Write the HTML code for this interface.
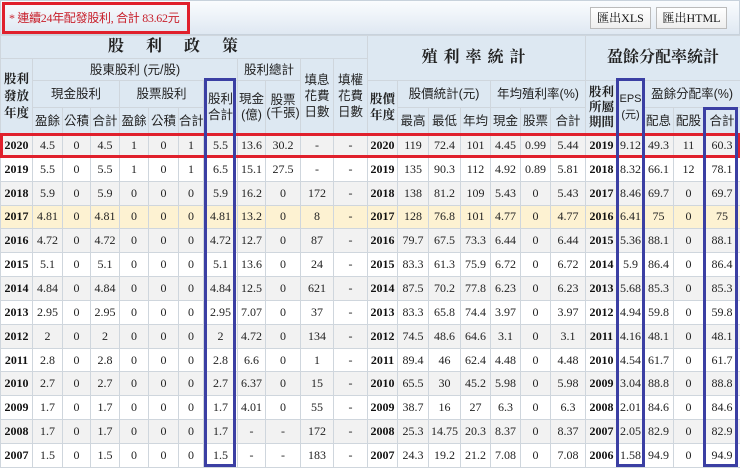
<!DOCTYPE html>
<html><head><meta charset="utf-8"><style>
*{margin:0;padding:0;box-sizing:border-box}
body{width:740px;height:467px;overflow:hidden;background:#fff;position:relative;font-family:"Liberation Serif","Noto Serif CJK SC",serif;}
.top{position:absolute;left:0;top:0;width:740px;height:35px;background:linear-gradient(#fafcfe,#dfe8f2);border:1px solid #c8d2dc;}
.rb{position:absolute;left:1px;top:1px;width:188px;height:32px;border:3px solid #e0202c;color:#c8202c;font-size:12px;line-height:26px;padding-left:4px;letter-spacing:-0.3px;white-space:nowrap;overflow:visible;font-family:"Liberation Serif","Noto Sans CJK TC",serif;}
.btn{position:absolute;top:6px;height:22px;border:1px solid #bbb;background:linear-gradient(#fff,#eee);font-size:12px;line-height:20px;text-align:center;color:#111;font-family:"Liberation Serif","Noto Serif CJK SC",serif;}
table{position:absolute;left:0;top:35px;border-collapse:collapse;table-layout:fixed;width:740px;}
td,th{border:1px solid #cfd6dd;text-align:center;font-size:12px;color:#222;padding:0;overflow:hidden;white-space:nowrap;}
th{background:#dde8f2;font-weight:normal;font-family:"Liberation Sans","Noto Sans CJK TC",sans-serif;font-size:12.5px;line-height:16px;color:#222}
th.b{font-weight:bold;font-family:"Liberation Serif","Noto Serif CJK TC",serif;}
th.big{font-size:16px;font-weight:bold;font-family:"Liberation Serif","Noto Serif CJK TC",serif;}
tbody td{height:23.85px;}
td.y{font-weight:bold;color:#111}
tr.g td{background:#f2f2f2}
tr.h td{background:#fdf2d2}
.box{position:absolute;border:3px solid #3b3fa3;}
.red{position:absolute;border:3px solid #e0202c;}
</style></head><body>
<div class="top"><div class="rb">* 連續24年配發股利, 合計 83.62元</div>
<div class="btn" style="left:589px;width:61px">匯出XLS</div>
<div class="btn" style="left:655px;width:71px">匯出HTML</div></div>
<table>
<colgroup>
<col style="width:32px"><col style="width:30px"><col style="width:28px"><col style="width:29px"><col style="width:29px"><col style="width:30px"><col style="width:25px"><col style="width:34px"><col style="width:28px"><col style="width:35px"><col style="width:33px"><col style="width:34px">
<col style="width:30px"><col style="width:31px"><col style="width:32px"><col style="width:30px"><col style="width:30px"><col style="width:30px"><col style="width:35px"><col style="width:32px"><col style="width:26px"><col style="width:30px"><col style="width:30px"><col style="width:37px">
</colgroup>
<thead>
<tr style="height:23px"><th colspan="12" class="big" style="letter-spacing:22px">股利政策</th><th colspan="7" rowspan="2" class="big" style="letter-spacing:6px">殖利率統計</th><th colspan="5" rowspan="2" class="big">盈餘分配率統計</th></tr>
<tr style="height:22px"><th rowspan="3" class="b" style="white-space:normal;line-height:17px">股利<br>發放<br>年度</th><th colspan="7">股東股利 (元/股)</th><th colspan="2">股利總計</th><th rowspan="3" style="white-space:normal">填息<br>花費<br>日數</th><th rowspan="3" style="white-space:normal">填權<br>花費<br>日數</th></tr>
<tr style="height:27px"><th colspan="3">現金股利</th><th colspan="3">股票股利</th><th rowspan="2">股利<br>合計</th><th rowspan="2">現金<br>(億)</th><th rowspan="2" style="line-height:13px">股票<br>(千張)</th><th rowspan="2" class="b">股價<br>年度</th><th colspan="3">股價統計(元)</th><th colspan="3">年均殖利率(%)</th><th rowspan="2" class="b" style="line-height:15px">股利<br>所屬<br>期間</th><th rowspan="2" style="font-size:11px">EPS<br>(元)</th><th colspan="3">盈餘分配率(%)</th></tr>
<tr style="height:26px"><th>盈餘</th><th>公積</th><th>合計</th><th>盈餘</th><th>公積</th><th>合計</th><th>最高</th><th>最低</th><th>年均</th><th>現金</th><th>股票</th><th>合計</th><th>配息</th><th>配股</th><th>合計</th></tr>
</thead>
<tbody>
<tr class="g"><td class="y">2020</td><td>4.5</td><td>0</td><td>4.5</td><td>1</td><td>0</td><td>1</td><td>5.5</td><td>13.6</td><td>30.2</td><td>-</td><td>-</td><td class="y">2020</td><td>119</td><td>72.4</td><td>101</td><td>4.45</td><td>0.99</td><td>5.44</td><td class="y">2019</td><td>9.12</td><td>49.3</td><td>11</td><td>60.3</td></tr>
<tr><td class="y">2019</td><td>5.5</td><td>0</td><td>5.5</td><td>1</td><td>0</td><td>1</td><td>6.5</td><td>15.1</td><td>27.5</td><td>-</td><td>-</td><td class="y">2019</td><td>135</td><td>90.3</td><td>112</td><td>4.92</td><td>0.89</td><td>5.81</td><td class="y">2018</td><td>8.32</td><td>66.1</td><td>12</td><td>78.1</td></tr>
<tr class="g"><td class="y">2018</td><td>5.9</td><td>0</td><td>5.9</td><td>0</td><td>0</td><td>0</td><td>5.9</td><td>16.2</td><td>0</td><td>172</td><td>-</td><td class="y">2018</td><td>138</td><td>81.2</td><td>109</td><td>5.43</td><td>0</td><td>5.43</td><td class="y">2017</td><td>8.46</td><td>69.7</td><td>0</td><td>69.7</td></tr>
<tr class="h"><td class="y">2017</td><td>4.81</td><td>0</td><td>4.81</td><td>0</td><td>0</td><td>0</td><td>4.81</td><td>13.2</td><td>0</td><td>8</td><td>-</td><td class="y">2017</td><td>128</td><td>76.8</td><td>101</td><td>4.77</td><td>0</td><td>4.77</td><td class="y">2016</td><td>6.41</td><td>75</td><td>0</td><td>75</td></tr>
<tr class="g"><td class="y">2016</td><td>4.72</td><td>0</td><td>4.72</td><td>0</td><td>0</td><td>0</td><td>4.72</td><td>12.7</td><td>0</td><td>87</td><td>-</td><td class="y">2016</td><td>79.7</td><td>67.5</td><td>73.3</td><td>6.44</td><td>0</td><td>6.44</td><td class="y">2015</td><td>5.36</td><td>88.1</td><td>0</td><td>88.1</td></tr>
<tr><td class="y">2015</td><td>5.1</td><td>0</td><td>5.1</td><td>0</td><td>0</td><td>0</td><td>5.1</td><td>13.6</td><td>0</td><td>24</td><td>-</td><td class="y">2015</td><td>83.3</td><td>61.3</td><td>75.9</td><td>6.72</td><td>0</td><td>6.72</td><td class="y">2014</td><td>5.9</td><td>86.4</td><td>0</td><td>86.4</td></tr>
<tr class="g"><td class="y">2014</td><td>4.84</td><td>0</td><td>4.84</td><td>0</td><td>0</td><td>0</td><td>4.84</td><td>12.5</td><td>0</td><td>621</td><td>-</td><td class="y">2014</td><td>87.5</td><td>70.2</td><td>77.8</td><td>6.23</td><td>0</td><td>6.23</td><td class="y">2013</td><td>5.68</td><td>85.3</td><td>0</td><td>85.3</td></tr>
<tr><td class="y">2013</td><td>2.95</td><td>0</td><td>2.95</td><td>0</td><td>0</td><td>0</td><td>2.95</td><td>7.07</td><td>0</td><td>37</td><td>-</td><td class="y">2013</td><td>83.3</td><td>65.8</td><td>74.4</td><td>3.97</td><td>0</td><td>3.97</td><td class="y">2012</td><td>4.94</td><td>59.8</td><td>0</td><td>59.8</td></tr>
<tr class="g"><td class="y">2012</td><td>2</td><td>0</td><td>2</td><td>0</td><td>0</td><td>0</td><td>2</td><td>4.72</td><td>0</td><td>134</td><td>-</td><td class="y">2012</td><td>74.5</td><td>48.6</td><td>64.6</td><td>3.1</td><td>0</td><td>3.1</td><td class="y">2011</td><td>4.16</td><td>48.1</td><td>0</td><td>48.1</td></tr>
<tr><td class="y">2011</td><td>2.8</td><td>0</td><td>2.8</td><td>0</td><td>0</td><td>0</td><td>2.8</td><td>6.6</td><td>0</td><td>1</td><td>-</td><td class="y">2011</td><td>89.4</td><td>46</td><td>62.4</td><td>4.48</td><td>0</td><td>4.48</td><td class="y">2010</td><td>4.54</td><td>61.7</td><td>0</td><td>61.7</td></tr>
<tr class="g"><td class="y">2010</td><td>2.7</td><td>0</td><td>2.7</td><td>0</td><td>0</td><td>0</td><td>2.7</td><td>6.37</td><td>0</td><td>15</td><td>-</td><td class="y">2010</td><td>65.5</td><td>30</td><td>45.2</td><td>5.98</td><td>0</td><td>5.98</td><td class="y">2009</td><td>3.04</td><td>88.8</td><td>0</td><td>88.8</td></tr>
<tr><td class="y">2009</td><td>1.7</td><td>0</td><td>1.7</td><td>0</td><td>0</td><td>0</td><td>1.7</td><td>4.01</td><td>0</td><td>55</td><td>-</td><td class="y">2009</td><td>38.7</td><td>16</td><td>27</td><td>6.3</td><td>0</td><td>6.3</td><td class="y">2008</td><td>2.01</td><td>84.6</td><td>0</td><td>84.6</td></tr>
<tr class="g"><td class="y">2008</td><td>1.7</td><td>0</td><td>1.7</td><td>0</td><td>0</td><td>0</td><td>1.7</td><td>-</td><td>-</td><td>172</td><td>-</td><td class="y">2008</td><td>25.3</td><td>14.75</td><td>20.3</td><td>8.37</td><td>0</td><td>8.37</td><td class="y">2007</td><td>2.05</td><td>82.9</td><td>0</td><td>82.9</td></tr>
<tr><td class="y">2007</td><td>1.5</td><td>0</td><td>1.5</td><td>0</td><td>0</td><td>0</td><td>1.5</td><td>-</td><td>-</td><td>183</td><td>-</td><td class="y">2007</td><td>24.3</td><td>19.2</td><td>21.2</td><td>7.08</td><td>0</td><td>7.08</td><td class="y">2006</td><td>1.58</td><td>94.9</td><td>0</td><td>94.9</td></tr>
</tbody></table>
<div class="red" style="left:0;top:133px;width:740px;height:25px"></div>
<div class="box" style="left:204px;top:78px;width:32px;height:389px"></div>
<div class="box" style="left:616px;top:78px;width:29px;height:389px"></div>
<div class="box" style="left:703px;top:107px;width:35px;height:360px"></div>
</body></html>
